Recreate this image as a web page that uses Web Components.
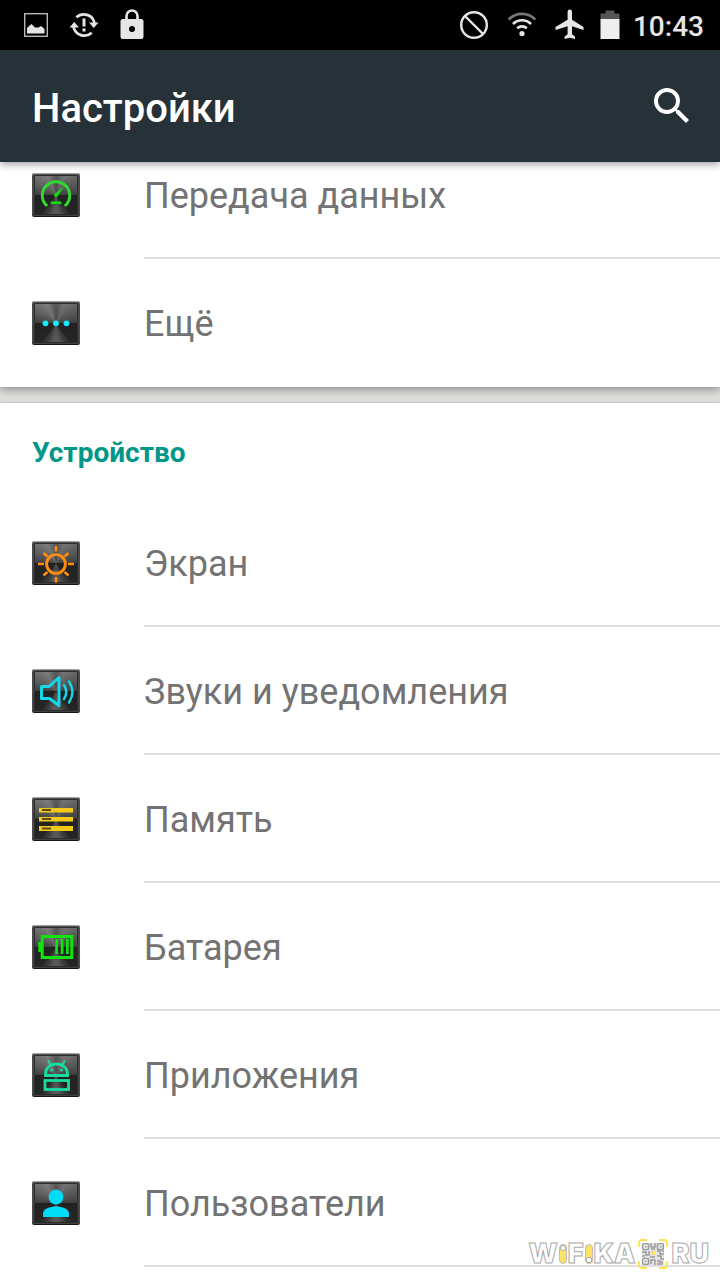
<!DOCTYPE html>
<html lang="ru">
<head>
<meta charset="utf-8">
<meta name="viewport" content="width=device-width, initial-scale=1">
<title>Настройки</title>
<style>
  body {
    margin: 0;
    background: #fff;
    font-family: Roboto, "Noto Sans", sans-serif;
  }
</style>
</head>
<body>
<settings-screen>
  <status-bar slot="status" time="10:43"></status-bar>
  <app-bar slot="bar">Настройки</app-bar>
  <settings-card class="scrolled">
    <settings-row icon="data">Передача данных</settings-row>
    <settings-row icon="more" last>Ещё</settings-row>
  </settings-card>
  <settings-card heading="Устройство">
    <settings-row icon="display">Экран</settings-row>
    <settings-row icon="sound">Звуки и уведомления</settings-row>
    <settings-row icon="storage">Память</settings-row>
    <settings-row icon="battery">Батарея</settings-row>
    <settings-row icon="apps">Приложения</settings-row>
    <settings-row icon="users">Пользователи</settings-row>
  </settings-card>
  <site-mark slot="mark"></site-mark>
</settings-screen>

<script>
const render = (host, html) => {
  const template = document.createElement("template");
  template.innerHTML = html;
  host.attachShadow({ mode: "open" }).append(template.content.cloneNode(true));
};

class SettingsScreen extends HTMLElement {
  constructor() {
    super();
    render(this, `
  <style>
    :host {
      position: relative;
      display: flex;
      flex-direction: column;
      height: 100vh;
      overflow: hidden;
    }
    main {
      flex: 1;
      min-height: 0;
      display: flex;
      flex-direction: column;
      gap: 16px;
      overflow: hidden;
      background: #e0e0de;
    }
    /* the list is scrolled down by a part of the first row */
    ::slotted(.scrolled) {
      margin-top: -31px;
    }
    ::slotted(settings-card:last-of-type) {
      flex: 1 0 auto;
    }
    ::slotted(site-mark) {
      position: absolute;
      right: 11px;
      bottom: 10px;
    }
  </style>
  <slot name="status"></slot>
  <slot name="bar"></slot>
  <main><slot></slot></main>
  <slot name="mark"></slot>
`);
  }
}

class StatusBar extends HTMLElement {
  constructor() {
    super();
    render(this, `
  <style>
    :host {
      display: flex;
      align-items: center;
      justify-content: space-between;
      height: 50px;
      padding: 0 16px 0 12px;
      background: #000;
      color: #e6e6e6;
    }
    div {
      display: flex;
      align-items: center;
    }
    svg {
      display: block;
      width: 48px;
      height: 48px;
      fill: currentColor;
    }
    .level {
      width: 32px;
    }
    time {
      margin-left: 7px;
      padding-top: 4px;
      font-size: 28px;
      line-height: 32px;
      font-weight: 500;
    }
  </style>
  <div>
    <svg viewBox="0 0 48 48" aria-hidden="true">
      <rect x="12.700" y="12.700" width="22.600" height="22.600" fill="none" stroke="#c4c4be" stroke-width="1.300"/>
      <path d="M15 32.500V27l4.500-4 3.500 3.500h3.500l2.500-1.500 3.500 3v4.500z"/>
    </svg>
    <svg viewBox="0 0 48 48" aria-hidden="true">
      <g fill="none" stroke="currentColor" stroke-width="2.700">
        <path d="M16.300 16.300A11 11 0 0 1 34.500 22"/>
        <path d="M31.700 31.700A11 11 0 0 1 13.500 26"/>
      </g>
      <path d="M29 21.500h9.500L33.700 27zM9.500 26.500h9.500L14.300 21zM22.500 17.500h3v8h-3zM22.500 27.500h3v3h-3z"/>
    </svg>
    <svg viewBox="0 0 48 48" aria-hidden="true">
      <path d="M18.500 19v-4a5.500 5.500 0 0 1 11 0v4" fill="none" stroke="currentColor" stroke-width="2.600"/>
      <rect x="12.500" y="18" width="23" height="20" rx="2.500"/>
      <circle cx="24" cy="28" r="3" fill="#000"/>
    </svg>
  </div>
  <div>
    <svg viewBox="0 0 48 48" aria-hidden="true">
      <g fill="none" stroke="currentColor" stroke-width="2.400">
        <circle cx="24" cy="24" r="12.800"/>
        <path d="M15 15l18 18"/>
      </g>
    </svg>
    <svg viewBox="0 0 48 48" aria-hidden="true">
      <g fill="none" stroke="currentColor" stroke-width="2.600">
        <path d="M10.700 18.500a18.500 18.500 0 0 1 26.600 0" stroke="#777"/>
        <path d="M15 23a12.700 12.700 0 0 1 18 0"/>
        <path d="M19.200 27.300a7 7 0 0 1 9.600 0"/>
      </g>
      <circle cx="24" cy="32.600" r="2.600"/>
    </svg>
    <svg viewBox="0 0 48 48" aria-hidden="true">
      <path d="M37.500 29v-2.900L26 18.700v-7.900a2.200 2.200 0 0 0-4.400 0v7.900L9.500 26.100V29l12.100-3.700v8l-3 2.300V38l5.200-1.200L29 38v-2.400l-3-2.300v-8z"/>
    </svg>
    <svg class="level" viewBox="0 0 32 48" aria-hidden="true">
      <path d="M6.500 19v-6.500h5V9.500h9v3h5V19z" fill="#555"/>
      <path d="M6.500 18h19v20h-19z" fill="#eee"/>
    </svg>
    <time></time>
  </div>
`);
  }

  connectedCallback() {
    this.shadowRoot.querySelector("time").textContent = this.getAttribute("time");
  }
}

class AppBar extends HTMLElement {
  constructor() {
    super();
    render(this, `
  <style>
    :host {
      position: relative;
      z-index: 1;
      display: flex;
      align-items: center;
      justify-content: space-between;
      height: 112px;
      padding: 0 24px 0 32px;
      background: #263238;
      color: #fff;
      box-shadow: 0 2px 8px rgba(0, 0, 0, .4);
    }
    h1 {
      margin: 0;
      padding-top: 6px;
      font-size: 40px;
      line-height: 48px;
      font-weight: 500;
    }
    button {
      padding: 0;
      border: 0;
      background: none;
      color: inherit;
    }
    svg {
      display: block;
      width: 48px;
      height: 48px;
    }
  </style>
  <h1><slot></slot></h1>
  <button type="button" aria-label="Поиск">
    <svg viewBox="0 0 24 24" fill="currentColor">
      <path d="M15.500 14h-.790l-.280-.270A6.470 6.470 0 0 0 16 9.500 6.500 6.500 0 1 0 9.500 16c1.610 0 3.090-.590 4.230-1.570l.270.280v.790l5 4.990L20.490 19l-4.990-5zm-6 0C7.010 14 5 11.990 5 9.500S7.010 5 9.500 5 14 7.010 14 9.500 11.990 14 9.500 14z"/>
    </svg>
  </button>
`);
  }
}

class SettingsCard extends HTMLElement {
  constructor() {
    super();
    render(this, `
  <style>
    :host {
      display: block;
      background: #fff;
      box-shadow: 0 4px 8px rgba(0, 0, 0, .3), 0 0 2px rgba(0, 0, 0, .15);
    }
    h2 {
      display: flex;
      align-items: center;
      box-sizing: border-box;
      height: 96px;
      margin: 0;
      padding: 4px 32px 0;
      color: #009688;
      font-size: 28px;
      line-height: 32px;
      font-weight: 700;
    }
    h2[hidden] {
      display: none;
    }
  </style>
  <h2 hidden></h2>
  <slot></slot>
`);
  }

  connectedCallback() {
    const heading = this.shadowRoot.querySelector("h2");
    heading.textContent = this.getAttribute("heading") || "";
    heading.hidden = !heading.textContent;
  }
}

class SettingsRow extends HTMLElement {
  constructor() {
    super();
    render(this, `
  <style>
    :host {
      display: block;
    }
    a {
      display: flex;
      align-items: center;
      gap: 64px;
      height: 128px;
      padding-left: 32px;
      color: #737373;
      text-decoration: none;
    }
    span {
      flex: 1;
      align-self: stretch;
      display: flex;
      align-items: center;
      box-sizing: border-box;
      border-bottom: 2px solid #dedede;
      padding-top: 4px;
      font-size: 36px;
      line-height: 48px;
    }
    :host([last]) span {
      border-color: transparent;
    }
  </style>
  <a href="#">
    <tile-icon></tile-icon>
    <span><slot></slot></span>
  </a>
`);
  }

  connectedCallback() {
    const icon = this.getAttribute("icon");
    this.shadowRoot.querySelector("tile-icon").setAttribute("name", icon);
    this.shadowRoot.querySelector("a").href = `#${icon}`;
  }
}

class TileIcon extends HTMLElement {
  static observedAttributes = ["name"];

  constructor() {
    super();
    render(this, `
  <style>
    /* brushed metal: a fan of light round the middle over a vertical shade */
    :host {
      display: block;
      width: 48px;
      height: 44px;
      border-radius: 2px;
      background:
        linear-gradient(rgba(255, 255, 255, .2), rgba(255, 255, 255, .06) 50%, rgba(0, 0, 0, .35) 50%, rgba(0, 0, 0, .25)),
        conic-gradient(#333, #555 25deg, #444 50deg, #333 90deg, #333 140deg, #777 172deg, #777 188deg, #333 220deg, #333 270deg, #555 320deg, #606060 335deg, #333);
      box-shadow: inset 0 1px 1px #aaa, inset 0 -1px 1px #111, inset 0 0 0 2px #484848, inset 0 0 0 3px #2c2c2c;
    }
    svg {
      display: block;
      width: 48px;
      height: 44px;
      fill: none;
    }
  </style>
  <svg viewBox="0 0 48 44" aria-hidden="true"></svg>
`);
  }

  attributeChangedCallback() {
    this.shadowRoot.querySelector("svg").innerHTML = this.getGlyphs()[this.getAttribute("name")] || "";
  }

  getGlyphs() {
    return {
      data: `
        <path d="M15.200 33A13.700 13.700 0 1 1 32.800 33" stroke="#2fdc2f" stroke-width="2.900"/>
        <path d="M32 13.500L25.500 23.500a2 2 0 0 1-3.200-2.300zM18.800 28.500h10.500v2.400H18.800z" fill="#0ee00e"/>`,
      more: `
        <g fill="#12ecff"><circle cx="13.500" cy="22.300" r="2.900"/><circle cx="24" cy="22.300" r="2.900"/><circle cx="34.500" cy="22.300" r="2.900"/></g>`,
      display: `
        <g stroke="#ff8c12" stroke-width="2.600">
          <circle cx="24" cy="23" r="9.400" stroke-width="2.900"/>
          <path d="M24 5v5.500M24 36v5.500M6 23h6M36 23h6M11.500 12l4 3.500M36.500 12l-4 3.500M11.500 34.500l4-3.500M36.500 34.500l-4-3.500"/>
        </g>`,
      sound: `
        <g stroke="#12d8e8" stroke-width="3" stroke-linejoin="round" stroke-linecap="round">
          <path d="M9.500 17.500h7.500L27 8.500v28L17.500 29.500h-8z"/>
          <path d="M32 16q4.500 7 0 14M37 12.500q7 10.500 0 21" stroke-width="2.400"/>
        </g>`,
      storage: `
        <path d="M7 11h34v4.500H7zM7 20h34v4.500H7zM7 29h34v5H7z" fill="#f2ca16"/>
        <path d="M10 12h9v2h-9zM10 21h9v2h-9zM10 30.500h9v2h-9z" fill="#5c4c16"/>`,
      battery: `
        <rect x="10.200" y="11.500" width="29.600" height="21" stroke="#10e410" stroke-width="3"/>
        <path d="M6.300 17h3v10h-3zM23.300 14h2.700v15h-2.700zM28.700 14h2.700v15h-2.700zM34 14h2.700v15H34z" fill="#10e410"/>`,
      apps: `
        <g stroke="#16dca0" stroke-width="2.800">
          <path d="M13.500 22.500v-2a11 9.500 0 0 1 22 0v2z"/>
          <path d="M16 7.500l3 5M33 7.500l-3 5" stroke-width="2"/>
          <rect x="13" y="27.500" width="23.500" height="9"/>
        </g>
        <g fill="#16dca0"><circle cx="19.500" cy="17" r="1.600"/><circle cx="29.500" cy="17" r="1.600"/></g>`,
      users: `
        <circle cx="24" cy="16" r="7.400" fill="#00dcf8"/>
        <path d="M11 36v-3.500C11 28 18 25.500 24 25.500S37 28 37 32.500V36z" fill="#00dcf8"/>`,
    };
  }
}

class SiteMark extends HTMLElement {
  constructor() {
    super();
    render(this, `
  <style>
    :host {
      display: flex;
      align-items: center;
      gap: 1px;
      height: 32px;
      color: #fff;
      font-family: Inter, "Open Sans", sans-serif;
      font-size: 27px;
      line-height: 32px;
      font-weight: 900;
      -webkit-text-stroke: 1px #aaa;
    }
    svg {
      display: block;
      flex: none;
    }
    .code {
      margin: 0 2px;
    }
  </style>
  <span>W</span>
  <svg width="8" height="20" viewBox="0 0 8 20" aria-hidden="true">
    <rect x=".500" y=".500" width="7" height="19" rx="3.500" fill="#f9e468" stroke="#bbb"/>
    <circle cx="4" cy="4" r="2.700" fill="#fff" stroke="#aaa"/>
  </svg>
  <span>F</span>
  <svg width="8" height="20" viewBox="0 0 8 20" aria-hidden="true">
    <rect x=".500" y=".500" width="7" height="19" rx="3.500" fill="#f9e468" stroke="#bbb"/>
    <circle cx="4" cy="16" r="2.700" fill="#fff" stroke="#aaa"/>
  </svg>
  <span>KA</span>
  <svg class="code" width="30" height="30" viewBox="0 0 30 30" aria-hidden="true">
    <path d="M1 8V4a3 3 0 0 1 3-3h5M21 1h5a3 3 0 0 1 3 3v4M29 22v4a3 3 0 0 1-3 3h-5M9 29H4a3 3 0 0 1-3-3v-4" fill="none" stroke="#fbe34e" stroke-width="1.800"/>
    <rect x="4" y="4" width="22" height="22" rx="2" fill="#e4e4e4"/>
    <g fill="none" stroke="#999" stroke-width="1.400">
      <rect x="4.600" y="4.600" width="6" height="6" rx="1.500"/>
      <rect x="19.400" y="4.600" width="6" height="6" rx="1.500"/>
      <rect x="4.600" y="19.400" width="6" height="6" rx="1.500"/>
      <path d="M7 7.600h1.500M22 7.600h1.500M7 22.400h1.500M13 4v4h4V4M13 10h4M4 13h4v3h3v-4M4 17h3M19 12h3v3h4M24 12h2M19 17h4v3h3M13 25v-4h4v5M19 22h3v4M24 22v4M12 18h5M19 25h2"/>
    </g>
    <rect x="13" y="12" width="4" height="4" fill="#f9e468"/>
  </svg>
  <span>RU</span>
`);
  }
}

window.customElements.define("tile-icon", TileIcon);
window.customElements.define("settings-row", SettingsRow);
window.customElements.define("settings-card", SettingsCard);
window.customElements.define("status-bar", StatusBar);
window.customElements.define("app-bar", AppBar);
window.customElements.define("site-mark", SiteMark);
window.customElements.define("settings-screen", SettingsScreen);
</script>
</body>
</html>
